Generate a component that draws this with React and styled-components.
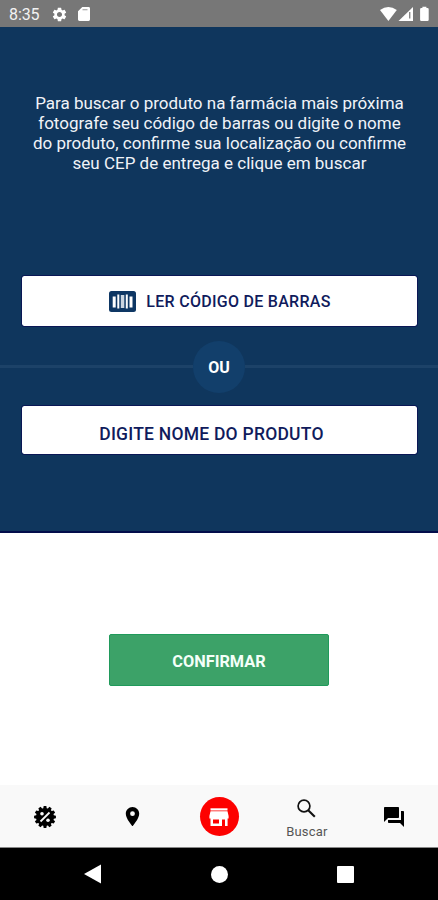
import React from "react";
import styled, { createGlobalStyle } from 'styled-components';
import { MdSettings, MdLocationOn, MdQuestionAnswer } from "react-icons/md";

const GlobalStyle = createGlobalStyle`
  * {
    box-sizing: border-box;
  }
  body {
    margin: 0;
    background-color: #fff;
    font-family: Roboto, "Liberation Sans", sans-serif;
  }
  button {
    font-family: inherit;
  }
`;

// outline of the offers badge, wide teeth with short slopes between them
const teeth = Array.from({length: 12}, (_, i) => (
  [[-11, 9], [-7, 11], [7, 11], [11, 9]].map(([offset, r]) => {
    const a = (i * 30 + offset) * Math.PI / 180;
    return `${12 + r * Math.sin(a)},${12 - r * Math.cos(a)}`;
  }).join(' ')
)).join(' ');

function SdCardIcon() {
  return (
    <svg width="12" height="14" viewBox="0 0 12 14">
      <path fill="#fff" d="M4.3 0h6.3q1.4 0 1.4 1.4v11.2q0 1.4-1.4 1.4H1.4Q0 14 0 12.6V4.3z"/>
      <path stroke="#aaa" strokeWidth="1.2" d="M4.5 2.7h5"/>
    </svg>
  )
}

function StatusIcons() {
  return (
    <svg width="50" height="16" viewBox="0 0 50 16" fill="#fff">
      <path d="M0 4Q8.4-2.2 16.8 4L8.4 15z"/>
      <path d="M33 1v14H18.5z"/>
      <path stroke="#888" strokeWidth="1.4" d="M29.7 6v6.5"/>
      <path d="M42.4 2V.8h4V2h1.1q1.2 0 1.2 1.2v10.6q0 1.2-1.2 1.2h-6.2q-1.2 0-1.2-1.2V3.2Q40.1 2 41.3 2z"/>
    </svg>
  )
}

function BarcodeIcon() {
  return (
    <svg width="27" height="21" viewBox="0 0 27 21">
      <rect width="27" height="21" rx="2.5" fill="#0e3764"/>
      <path fill="#fff" d="M3.7 5.5h3v11h-3zM8.3 3.5h2v14h-2zM16.8 3.5h2v14h-2zM20.5 5.5h3v11h-3z"/>
      <path fill="#cbd5e0" d="M11.8 4h3.5v13h-3.5z"/>
    </svg>
  )
}

function OffersIcon() {
  return (
    <svg width="24" height="24" viewBox="0 0 24 24">
      <polygon points={teeth}/>
      <path fill="none" stroke="#fafafa" strokeWidth="1.8" d="M7.5 16.5l9-9"/>
      <circle cx="9" cy="8.8" r="1.8" fill="#fafafa"/>
      <circle cx="15" cy="15.2" r="1.8" fill="#fafafa"/>
    </svg>
  )
}

function StoreIcon() {
  return (
    <svg width="20" height="18" viewBox="0 0 20 18" fill="#fff">
      <path d="M1.5 .3h17v2.2h-17z"/>
      <path fillRule="evenodd" d="M1.5 3.3h17L19.6 8v2.5h-1V18h-2.6v-6.5h-3V18H1.5v-7.5H.4V8zM4 11.5v4h6v-4z"/>
    </svg>
  )
}

function SearchIcon() {
  return (
    <svg width="19" height="19" viewBox="0 0 19 19" fill="none" stroke="#111">
      <circle cx="7" cy="7" r="5.9" strokeWidth="1.7"/>
      <path strokeWidth="2.1" d="M11.2 11.2l6.6 6.6"/>
    </svg>
  )
}

export default function App() {
  return (
    <Screen>
      <GlobalStyle/>
      <StatusBar>
        <Time>8:35</Time>
        <MdSettings size={17}/>
        <SdCardIcon/>
        <StatusRight><StatusIcons/></StatusRight>
      </StatusBar>
      <SearchPanel>
        <Message>
          Para buscar o produto na farmácia mais próxima<br/>
          fotografe seu código de barras ou digite o nome<br/>
          do produto, confirme sua localização ou confirme<br/>
          seu CEP de entrega e clique em buscar
        </Message>
        <ScanButton>
          <BarcodeIcon/>
          <ButtonLabel>LER CÓDIGO DE BARRAS</ButtonLabel>
        </ScanButton>
        <Divider>
          <Line/>
          <Or>OU</Or>
          <Line/>
        </Divider>
        <NameButton>
          <ButtonLabel $wide>DIGITE NOME DO PRODUTO</ButtonLabel>
        </NameButton>
      </SearchPanel>
      <ConfirmArea>
        <ConfirmButton>CONFIRMAR</ConfirmButton>
      </ConfirmArea>
      <TabBar>
        <Tab><OffersIcon/></Tab>
        <Tab><MdLocationOn size={23}/></Tab>
        <Tab><StoreBadge><StoreIcon/></StoreBadge></Tab>
        <Tab $active>
          <SearchIcon/>
          <TabLabel>Buscar</TabLabel>
        </Tab>
        <Tab><MdQuestionAnswer size={24}/></Tab>
      </TabBar>
      <SystemBar>
        <svg width="17" height="20" viewBox="0 0 17 20"><path fill="#fff" d="M0 10L17 .5v19z"/></svg>
        <HomeDot/>
        <RecentSquare/>
      </SystemBar>
    </Screen>
  )
}

const Screen = styled.div`
  width: 438px;
  height: 900px;
  display: flex;
  flex-direction: column;
  overflow: hidden;
`;

const StatusBar = styled.div`
  height: 27px;
  flex: none;
  display: flex;
  align-items: center;
  padding: 1px 6px 0 9px;
  background-color: #777;
  color: #fff;
`;
const Time = styled.span`
  width: 42px;
  font-size: 16px;
  letter-spacing: -0.1px;
  color: #f2f2f2;
  & + svg {
    margin-right: 10px;
  }
`;
const StatusRight = styled.div`
  display: flex;
  margin-left: auto;
  margin-right: 2px;
`;

const SearchPanel = styled.div`
  height: 506px;
  flex: none;
  display: flex;
  flex-direction: column;
  align-items: center;
  padding-top: 66px;
  background-color: #0f365d;
  border-bottom: 2px solid #020d4b;
`;
const Message = styled.p`
  height: 182px;
  margin: 0;
  padding-left: 1px;
  font-size: 17px;
  line-height: 20px;
  text-align: center;
  white-space: nowrap;
  color: #f0f3f8;
`;
const PanelButton = styled.button`
  width: 397px;
  flex: none;
  display: flex;
  align-items: center;
  justify-content: center;
  padding: 0;
  background-color: #fff;
  border: 1px solid #0a1755;
  border-radius: 3px;
  background-clip: padding-box;
`;
const ScanButton = styled(PanelButton)`
  height: 52px;
  gap: 10px;
  padding-left: 2px;
`;
const NameButton = styled(PanelButton)`
  height: 50px;
  padding: 7px 15px 0 0;
`;
const ButtonLabel = styled.span`
  font-size: ${props => props.$wide ? '17.5px' : '16px'};
  font-weight: 500;
  letter-spacing: ${props => props.$wide ? '0.23px' : '0.28px'};
  color: #101b5c;
`;
const Divider = styled.div`
  width: 100%;
  height: 78px;
  display: flex;
  align-items: center;
  padding-top: 1px;
`;
const Line = styled.div`
  height: 3px;
  flex: 1;
  background-color: #1c4268;
`;
const Or = styled.div`
  width: 52px;
  height: 52px;
  display: flex;
  align-items: center;
  justify-content: center;
  padding-top: 1px;
  border-radius: 50%;
  background-color: #123f6b;
  color: #fff;
  font-size: 16px;
  font-weight: 700;
`;

const ConfirmArea = styled.div`
  flex: 1;
  display: flex;
  justify-content: center;
  align-items: flex-start;
  padding-top: 101px;
`;
const ConfirmButton = styled.button`
  width: 220px;
  height: 52px;
  padding: 2px 0 0;
  border: 1px solid #209a5b;
  border-radius: 2px;
  background-color: #3ca268;
  color: #f4fff8;
  font-size: 16.3px;
  font-weight: 700;
`;

const TabBar = styled.div`
  height: 63px;
  flex: none;
  display: grid;
  grid-template-columns: repeat(5, 1fr);
  padding-left: 1px;
  background-color: #f9f9f9;
  border-bottom: 1px solid #888;
`;
const Tab = styled.div`
  display: flex;
  flex-direction: column;
  align-items: center;
  justify-content: center;
  padding-top: ${props => props.$active ? '7px' : '1px'};
`;
const TabLabel = styled.span`
  margin-top: 6px;
  font-size: 13px;
  line-height: 16px;
  letter-spacing: 0.2px;
  color: #555;
`;
const StoreBadge = styled.div`
  width: 39px;
  height: 39px;
  display: flex;
  align-items: center;
  justify-content: center;
  border-radius: 50%;
  background-color: #fd0100;
`;

const SystemBar = styled.div`
  height: 52px;
  flex: none;
  display: flex;
  align-items: center;
  justify-content: space-between;
  padding: 0 84px 0 84px;
  background-color: #000;
`;
const HomeDot = styled.div`
  width: 17px;
  height: 17px;
  border-radius: 50%;
  background-color: #fff;
`;
const RecentSquare = styled.div`
  width: 17px;
  height: 17px;
  border-radius: 1px;
  background-color: #fff;
`;
